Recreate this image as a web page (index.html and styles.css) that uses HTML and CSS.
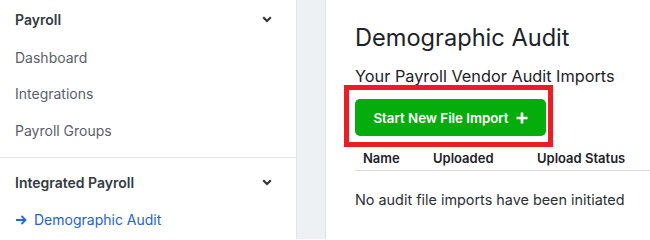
FILE: index.html
```html
<!DOCTYPE html>
<html>
<head>
<meta charset="utf-8">
<link rel="stylesheet" href="styles.css">
</head>
<body>
<div class="layout">
  <aside class="sidebar">
    <section class="nav-section first">
      <div class="nav-head">
        <span>Payroll</span>
        <svg class="chev" viewBox="0 0 10 7" width="10" height="7"><path d="M1.2 1.3 L5 5 L8.8 1.3" fill="none" stroke="#333" stroke-width="2.2"/></svg>
      </div>
      <div class="nav-item">Dashboard</div>
      <div class="nav-item">Integrations</div>
      <div class="nav-item">Payroll Groups</div>
    </section>
    <section class="nav-section second">
      <div class="nav-head">
        <span>Integrated Payroll</span>
        <svg class="chev" viewBox="0 0 10 7" width="10" height="7"><path d="M1.2 1.3 L5 5 L8.8 1.3" fill="none" stroke="#333" stroke-width="2.2"/></svg>
      </div>
      <div class="nav-item active">
        <svg class="arrow" viewBox="0 0 12 12" width="12" height="12"><path d="M1 6 H10.5 M6.5 2 L10.5 6 L6.5 10" fill="none" stroke="#2166d1" stroke-width="1.8"/></svg>
        <span>Demographic Audit</span>
      </div>
    </section>
  </aside>
  <div class="gutter"></div>
  <main class="main">
    <h1 class="title">Demographic Audit</h1>
    <h2 class="subtitle">Your Payroll Vendor Audit Imports</h2>
    <div class="btn-wrap">
      <button class="btn">Start New File Import
        <svg class="plus" viewBox="0 0 12 12" width="12" height="12"><path d="M6 0.5 V11.5 M0.5 6 H11.5" stroke="#fff" stroke-width="2.6"/></svg>
      </button>
      <div class="highlight"></div>
    </div>
    <div class="table-head">
      <span class="col-name">Name</span>
      <span class="col-up">Uploaded</span>
      <span class="col-status">Upload Status</span>
    </div>
    <p class="empty">No audit file imports have been initiated</p>
  </main>
</div>
</body>
</html>
```

FILE: styles.css
```css
html, body {
  margin: 0;
  padding: 0;
  background: #fff;
  font-family: Inter, "Noto Sans", sans-serif;
}
.layout {
  display: flex;
  width: 650px;
  height: 239px;
  overflow: hidden;
}
.sidebar {
  width: 297px;
  flex: none;
  border-right: 1px solid #e3e6e8;
  box-sizing: border-box;
}
.nav-section {
  padding: 0 22px 0 15px;
}
.nav-section.first {
  padding-bottom: 8px;
  border-bottom: 1px solid #dfe2e5;
}
.nav-section.second {
  padding-top: 5px;
}
.nav-head {
  display: flex;
  align-items: center;
  justify-content: space-between;
  height: 39px;
  font-size: 14px;
  font-weight: 600;
  color: #333a40;
}
.chev {
  margin-right: 2px;
}
.nav-item {
  display: flex;
  align-items: center;
  height: 36.5px;
  font-size: 14px;
  color: #5a6068;
}
.nav-item.active {
  color: #2463c9;
  gap: 7px;
}
.gutter {
  width: 28px;
  flex: none;
  background: #eef1f3;
  border-right: 1px solid #e0e3e6;
}
.main {
  flex: 1;
  padding-left: 29px;
  color: #1c2127;
}
.title {
  margin: 24px 0 0;
  font-size: 23.6px;
  font-weight: 400;
  line-height: 28px;
  color: #1d2228;
}
.subtitle {
  margin: 14px 0 0;
  font-size: 16.3px;
  font-weight: 400;
  line-height: 20px;
  color: #1d2228;
}
.btn-wrap {
  position: relative;
  width: 191px;
  margin-top: 13px;
}
.btn {
  display: flex;
  align-items: center;
  justify-content: center;
  gap: 7px;
  width: 191px;
  height: 37px;
  border: none;
  border-radius: 5px;
  background: #05ad0c;
  color: #fff;
  font-family: Inter, "Noto Sans", sans-serif;
  font-size: 13.3px;
  font-weight: 600;
  padding: 0;
}
.highlight {
  position: absolute;
  left: -11px;
  top: -14px;
  right: -7px;
  bottom: -11px;
  border: 5px solid #ec1c24;
  pointer-events: none;
}
.table-head {
  display: flex;
  margin-top: 10px;
  padding: 0 0 0 8px;
  height: 24px;
  align-items: center;
  border-bottom: 1.5px solid #d7dbdf;
  font-size: 13px;
  font-weight: 600;
  color: #1d2228;
}
.col-name { width: 70px; }
.col-up { width: 104px; }
.empty {
  margin: 20px 0 0;
  font-size: 14.4px;
  color: #2b3036;
}
```
